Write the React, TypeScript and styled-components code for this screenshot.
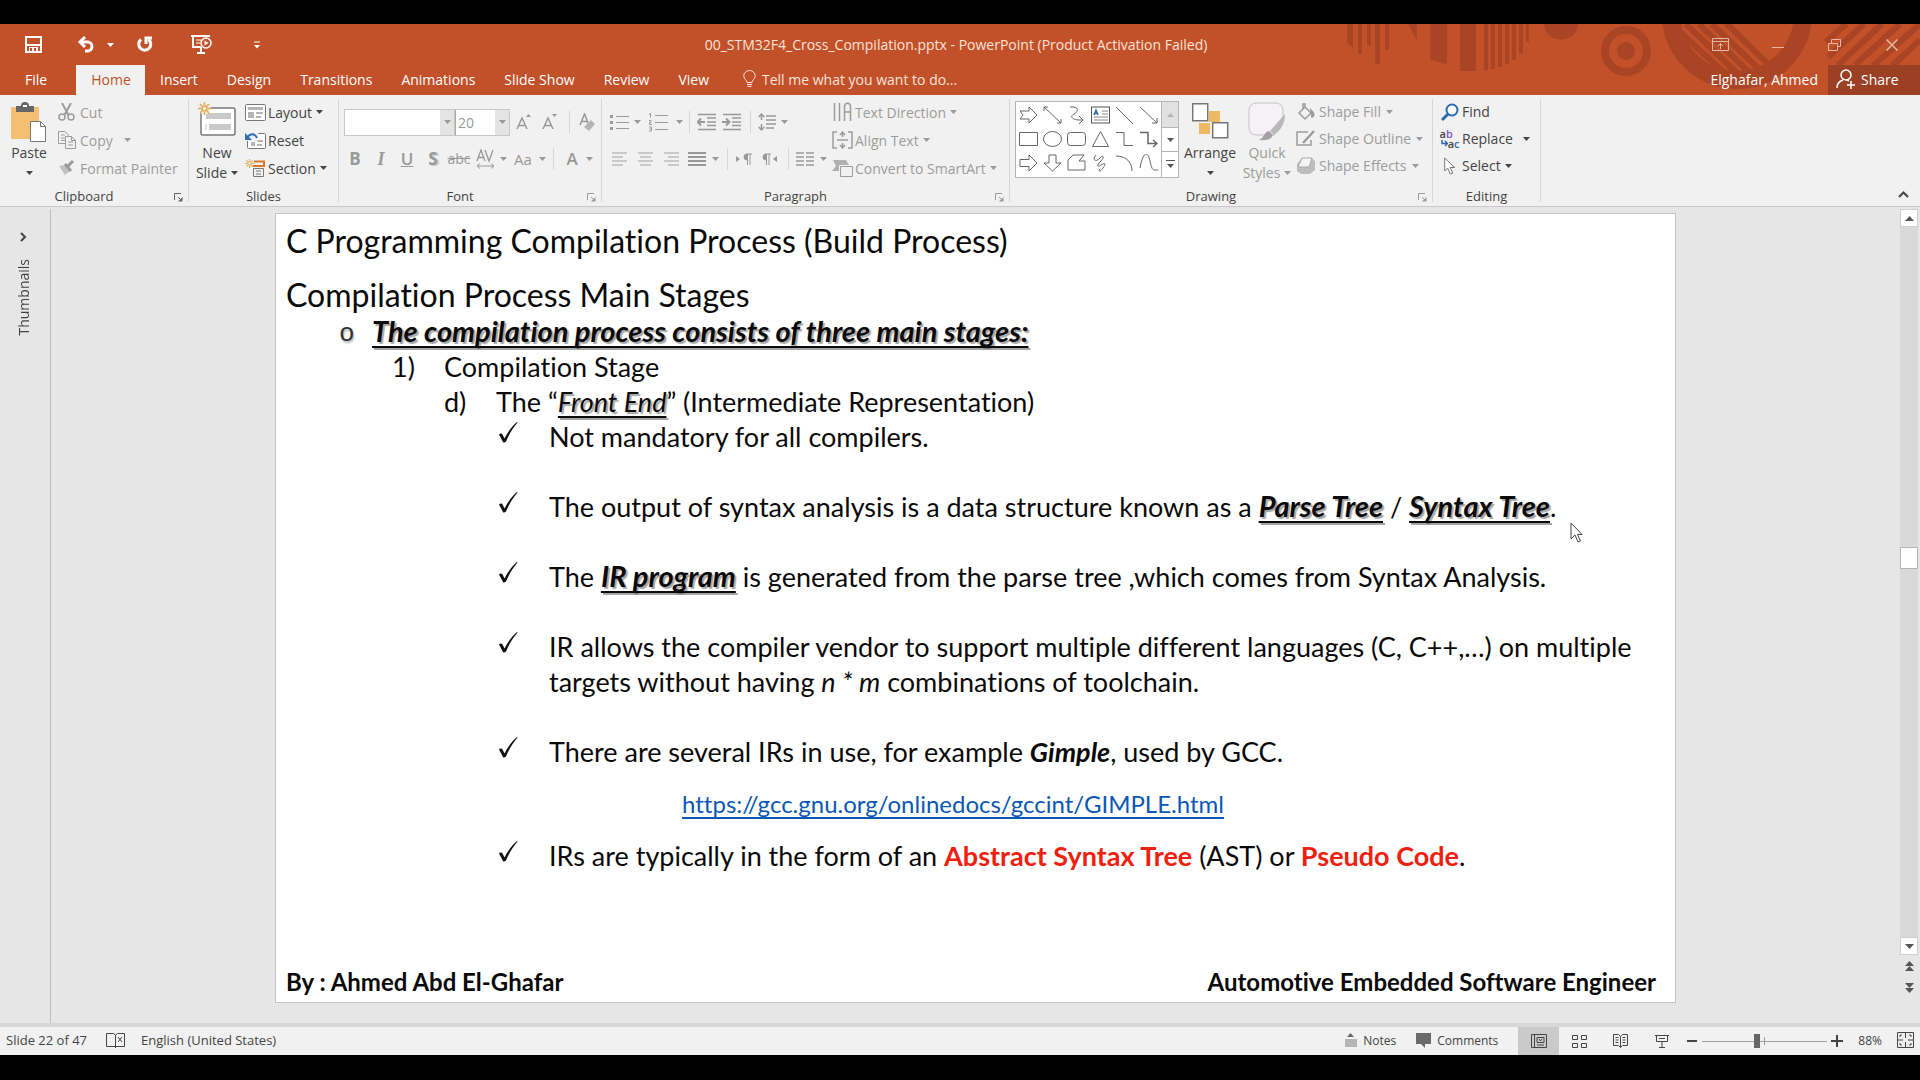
import React from "react";
import styled, { createGlobalStyle, css } from "styled-components";

const ui = `"Open Sans", "Noto Sans", sans-serif`;
const slideFont = `Lato, "Open Sans", sans-serif`;

const c = {
  brand: "#c25029",
  brandDark: "#9c4023",
  pattern: "#a94524",
  ribbon: "#f1f1f1",
  canvas: "#e6e6e6",
  line: "#c8c8c8",
  text: "#444444",
  dim: "#9c9c9c",
  cream: "#fbe3d8",
};

const GlobalStyle = createGlobalStyle`
  *, *::before, *::after { box-sizing: border-box; }
  body { margin: 0; background: #000; }
  button, select, input { font: inherit; color: inherit; margin: 0; }
`;

const Page = styled.div`
  position: relative;
  display: flex;
  flex-direction: column;
  min-height: 100vh;
  padding: 24px 0 25px;
  background: #000;
  font-family: ${ui};
  font-size: 14px;
  color: ${c.text};
`;

const bare = css`
  display: flex;
  align-items: center;
  padding: 0;
  border: 0;
  background: none;
  white-space: nowrap;
`;

/* ---------- header ---------- */

const Header = styled.header`
  position: relative;
  background: ${c.brand};
  color: #fff;
`;

const Pattern = styled.svg`
  position: absolute;
  top: 0;
  right: 0;
`;

const TitleBar = styled.div`
  position: relative;
  display: grid;
  grid-template-columns: 1fr auto 1fr;
  align-items: center;
  height: 41px;
  padding-right: 8px;
`;

const QuickAccess = styled.div`
  display: flex;
  align-items: center;
`;

const QuickButton = styled.button<{ $w: number }>`
  ${bare}
  justify-content: center;
  width: ${(p) => p.$w}px;
  height: 32px;
`;

const DocTitle = styled.div`
  color: ${c.cream};
`;

const WindowControls = styled.div`
  display: flex;
  justify-content: flex-end;
  margin-right: -8px;
`;

const WindowButton = styled.button`
  ${bare}
  justify-content: center;
  width: 57px;
  height: 38px;
  color: #e9b8a3;
`;

const TabBar = styled.nav`
  position: relative;
  display: flex;
  align-items: stretch;
  height: 30px;
`;

const Tab = styled.button<{ $active?: boolean; $file?: boolean }>`
  ${bare}
  justify-content: center;
  padding: 0 14px 2px 15px;
  color: ${(p) => (p.$active ? c.brand : "#fff")};
  background: ${(p) => (p.$active ? c.ribbon : "transparent")};
  ${(p) => p.$file && "width: 76px; padding-right: 19px;"}
  ${(p) => p.$active && "width: 69px;"}
`;

const TellMe = styled.button`
  ${bare}
  gap: 6px;
  margin-left: 20px;
  padding-bottom: 2px;
  color: ${c.cream};
`;

const Account = styled.div`
  display: flex;
  align-items: stretch;
  margin-left: auto;
`;

const AccountName = styled.button`
  ${bare}
  padding: 0 10px 2px;
`;

const Share = styled.button`
  ${bare}
  gap: 5px;
  width: 92px;
  padding: 0 0 2px 8px;
  background: ${c.brandDark};
`;

/* ---------- ribbon ---------- */

const Ribbon = styled.div`
  display: flex;
  height: 112px;
  background: ${c.ribbon};
  border-bottom: 1px solid ${c.line};
`;

const Group = styled.section<{ $w: number }>`
  display: flex;
  flex-direction: column;
  width: ${(p) => p.$w}px;
`;

const Divider = styled.div`
  width: 1px;
  margin: 4px 0;
  background: #d6d6d6;
`;

const GroupBody = styled.div<{ $pad?: number }>`
  display: flex;
  flex: 1;
  align-items: flex-start;
  padding-left: ${(p) => p.$pad ?? 0}px;
`;

const GroupFoot = styled.div`
  display: flex;
  height: 18px;
  font-size: 13px;
  line-height: 16px;
  span { flex: 1; text-align: center; }
`;

const Launcher = styled.button<{ $dim?: boolean }>`
  ${bare}
  justify-content: center;
  width: 20px;
  color: ${(p) => (p.$dim ? c.dim : "#666")};
`;

const Big = styled.button<{ $w: number; $dim?: boolean }>`
  ${bare}
  flex-direction: column;
  width: ${(p) => p.$w}px;
  padding-top: 7px;
  line-height: 20px;
  color: ${(p) => (p.$dim ? c.dim : c.text)};
`;

const BigIcon = styled.span`
  display: flex;
  justify-content: center;
  height: 41px;
`;

const BigLine = styled.span`
  display: flex;
  align-items: center;
  gap: 4px;
  height: 20px;
`;

const Stack = styled.div<{ $row: number; $ml?: number }>`
  display: grid;
  grid-auto-rows: ${(p) => p.$row}px;
  padding-top: 3px;
  margin-left: ${(p) => p.$ml ?? 0}px;
`;

const Small = styled.button<{ $dim?: boolean; $gap?: number; $drop?: number }>`
  ${bare}
  gap: ${(p) => p.$gap ?? 2}px;
  color: ${(p) => (p.$dim ? c.dim : c.text)};
  > span:first-child { display: flex; justify-content: center; width: 21px; }
  > svg:last-child { margin-left: ${(p) => p.$drop ?? 4}px; }
`;

const ToolRows = styled.div<{ $w?: number }>`
  display: grid;
  grid-template-rows: 26px 26px;
  gap: 11px;
  padding-top: 14px;
  ${(p) => p.$w && `width: ${p.$w}px;`}
`;

const ToolRow = styled.div`
  display: flex;
  align-items: center;
`;

const Tool = styled.button<{ $w: number; $faint?: boolean }>`
  ${bare}
  justify-content: center;
  width: ${(p) => p.$w}px;
  height: 26px;
  font-size: 17px;
  color: ${(p) => (p.$faint ? "#c9c9c9" : "#999")};
`;

const ToolGap = styled.span<{ $w: number }>`
  display: flex;
  justify-content: center;
  width: ${(p) => p.$w}px;
  &::before { content: ""; width: 1px; height: 22px; background: #d6d6d6; }
`;

const Glyph = styled.span<{ $kind: "b" | "i" | "u" | "s" | "abc" | "aa" | "a" }>`
  line-height: 20px;
  ${(p) => p.$kind === "b" && "font-weight: 700;"}
  ${(p) => p.$kind === "i" && "font: italic 700 18px 'Liberation Serif', serif;"}
  ${(p) => p.$kind === "u" && "font-weight: 600; text-decoration: underline;"}
  ${(p) => p.$kind === "s" && "font-weight: 700; text-shadow: 2px 1px 1px #c4c4c4;"}
  ${(p) => p.$kind === "abc" && "font-size: 14px; text-decoration: line-through;"}
  ${(p) => p.$kind === "aa" && "font-size: 15px;"}
  ${(p) => p.$kind === "a" && "font-weight: 600;"}
`;

const Combo = styled.label<{ $w: number }>`
  display: flex;
  width: ${(p) => p.$w}px;
  height: 27px;
  border: 1px solid ${c.line};
  background: #fff;
  color: #999;
  & + & { border-left-color: #aaa; }
  select {
    flex: 1;
    min-width: 0;
    padding: 0 2px;
    border: 0;
    background: none;
    appearance: none;
    outline: none;
  }
  > span {
    display: flex;
    align-items: center;
    justify-content: center;
    width: 14px;
    background: #e4e4e4;
  }
`;

const FirstRow = styled(ToolRow)`
  padding-left: 2px;
`;

const Gallery = styled.div`
  display: flex;
  width: 164px;
  height: 77px;
  margin: 6px 1px 0 5px;
  border: 1px solid #b4b4b4;
  background: #fff;
`;

const GalleryGrid = styled.div`
  display: grid;
  flex: 1;
  grid-template-columns: repeat(6, 24px);
  grid-auto-rows: 24px;
  padding: 1px 0 0;
`;

const GalleryItem = styled.button`
  ${bare}
  justify-content: center;
`;

const GalleryScroll = styled.div`
  display: grid;
  grid-template-rows: 25px 24px 1fr;
  width: 17px;
  border-left: 1px solid #b4b4b4;
`;

const ScrollStep = styled.button<{ $off?: boolean }>`
  ${bare}
  justify-content: center;
  background: ${(p) => (p.$off ? "#e1e1e1" : "#fff")};
  color: ${(p) => (p.$off ? "#b4b4b4" : "#555")};
  & + & { border-top: 1px solid #b4b4b4; }
`;

const Collapse = styled.button`
  ${bare}
  align-self: flex-end;
  justify-content: center;
  width: 34px;
  height: 24px;
  margin-left: auto;
`;

/* ---------- workspace ---------- */

const Workspace = styled.div`
  display: flex;
  flex: 1;
  background: ${c.canvas};
`;

const Thumbnails = styled.aside`
  display: flex;
  flex-direction: column;
  align-items: center;
  width: 51px;
  margin-top: 2px;
  padding: 18px 4px 0 0;
  border-right: 1px solid #bdbdbd;
`;

const PaneToggle = styled.button`
  ${bare}
  justify-content: center;
  width: 24px;
  height: 20px;
`;

const PaneName = styled.span`
  margin-top: 12px;
  writing-mode: vertical-rl;
  transform: rotate(180deg);
`;

const Canvas = styled.main`
  display: flex;
  flex: 1;
  padding: 6px 224px 20px;
`;

const Slide = styled.article`
  display: flex;
  flex: 1;
  flex-direction: column;
  padding: 5px 19px 0 10px;
  border: 1px solid #c4c4c4;
  background: #fff;
  font-family: ${slideFont};
  font-size: 27px;
  font-variant-ligatures: none;
  line-height: 35px;
  color: #0a0a0a;
  em, strong { line-height: 1; }
`;

const Heading = styled.h1`
  margin: 0 0 12px;
  font-size: 32px;
  font-weight: 400;
  line-height: 44px;
`;

const SubHeading = styled.h2`
  margin: 0;
  font-size: 32px;
  font-weight: 400;
  line-height: 39px;
`;

const List = styled.ul<{ $pl?: number }>`
  margin: 0;
  padding: 0 0 0 ${(p) => p.$pl ?? 0}px;
  list-style: none;
`;

const Item = styled.li<{ $marker: number; $after?: number }>`
  display: grid;
  grid-template-columns: ${(p) => p.$marker}px 1fr;
  margin-bottom: ${(p) => p.$after ?? 0}px;
`;

const Marker = styled.span`
  display: block;
  height: 35px;
`;

const Round = styled(Marker)`
  font-family: "Liberation Mono", monospace;
  font-size: 26px;
  line-height: 40px;
  color: #333;
  text-shadow: 1px 2px 2px rgba(0, 0, 0, 0.3);
`;

const Key = styled.em<{ $bold?: boolean }>`
  font-weight: ${(p) => (p.$bold ? 700 : 400)};
  font-size: ${(p) => (p.$bold ? 29 : 27)}px;
  text-decoration: underline;
  text-decoration-thickness: 2px;
  text-underline-offset: 4px;
  text-decoration-skip-ink: none;
  text-shadow: 2px 2px 1px rgba(0, 0, 0, 0.35);
`;

const StrongItalic = styled.em`
  font-weight: 700;
`;

const Red = styled.strong`
  color: #f0200f;
`;

const LinkRow = styled.p`
  margin: 17px 0;
  padding-left: 133px;
  font-size: 24px;
  a {
    color: #0b57b5;
    text-decoration-thickness: 2px;
    text-underline-offset: 4px;
    text-decoration-skip-ink: none;
  }
`;

const SlideFoot = styled.footer`
  display: flex;
  justify-content: space-between;
  margin-top: auto;
  padding-bottom: 3px;
  font-size: 24px;
  font-weight: 700;
`;

const ScrollBar = styled.div`
  display: flex;
  flex-direction: column;
  width: 20px;
  padding: 2px 2px 24px 0;
`;

const BarButton = styled.button<{ $plain?: boolean }>`
  ${bare}
  justify-content: center;
  height: ${(p) => (p.$plain ? 22 : 18)}px;
  border: 1px solid ${(p) => (p.$plain ? "transparent" : "#cfcfcf")};
  background: ${(p) => (p.$plain ? "transparent" : "#fff")};
  color: #555;
`;

const BarTrack = styled.div`
  display: flex;
  flex: 1;
  flex-direction: column;
  background: #d9d9d9;
  &::before { content: ""; flex: 320; }
  &::after { content: ""; flex: 368; }
`;

const BarThumb = styled.div`
  height: 22px;
  border: 1px solid #b4b4b4;
  background: #fff;
`;

/* ---------- status bar ---------- */

const Status = styled.footer`
  display: flex;
  align-items: center;
  height: 32px;
  padding: 0 6px;
  border-top: 4px solid #d7d7d7;
  background: ${c.ribbon};
  font-size: 13px;
`;

const StatusButton = styled.button<{ $ml?: number; $mr?: number }>`
  ${bare}
  gap: 6px;
  margin-left: ${(p) => p.$ml ?? 0}px;
  margin-right: ${(p) => p.$mr ?? 0}px;
  padding-bottom: 2px;
`;

const StatusRight = styled.div`
  display: flex;
  align-items: center;
  align-self: stretch;
  margin-left: auto;
  font-size: 12px;
`;

const ViewButton = styled.button<{ $active?: boolean }>`
  ${bare}
  justify-content: center;
  align-self: stretch;
  width: 41px;
  background: ${(p) => (p.$active ? "#cacaca" : "transparent")};
`;

const ZoomStep = styled.button`
  ${bare}
  justify-content: center;
  width: 20px;
`;

const Zoom = styled.input`
  width: 125px;
  height: 16px;
  appearance: none;
  background:
    linear-gradient(#999, #999) 62px center / 1px 8px no-repeat,
    linear-gradient(#a0a0a0, #a0a0a0) center / 100% 1px no-repeat;
  &::-webkit-slider-thumb {
    appearance: none;
    width: 6px;
    height: 14px;
    background: #666;
  }
`;

const Pointer = styled.svg`
  position: absolute;
  left: 1570px;
  top: 522px;
`;

/* ---------- icons ---------- */

type IconProps = { w: number; h: number; children: React.ReactNode; sw?: number };
const Icon = ({ w, h, children, sw = 1 }: IconProps) => (
  <svg width={w} height={h} viewBox={`0 0 ${w} ${h}`} fill="none" stroke="currentColor" strokeWidth={sw} aria-hidden="true">
    {children}
  </svg>
);

const Caret = () => (
  <Icon w={7} h={4}><path d="M0 0h7L3.5 4z" fill="currentColor" stroke="none" /></Icon>
);

const Lines = ({ rows, w = 18 }: { rows: [number, number][]; w?: number }) => (
  <Icon w={w} h={17} sw={2}>
    {rows.map(([a, b], i) => <path key={i} d={`M${a} ${2 + i * 4}H${b}`} />)}
  </Icon>
);

const LauncherIcon = () => (
  <Icon w={9} h={9}><path d="M.5 7V.5H7" /><path d="M4 4l3 3" /><path d="M8.500 4v4.500H4z" fill="currentColor" stroke="none" /></Icon>
);

const HeaderPattern = () => (
  <Pattern width="640" height="71" viewBox="0 0 640 71" fill={c.pattern} aria-hidden="true">
    <path d="M67 0h6v23l-6-4zM78 0h4v30h-4zM87 0h4v22h-4zM95 0h5v40h-5zM105 0h4v26h-4z" />
    <path d="M128 0h9v17zM150 0h17v41l-17-6zM180 0h16v47h-16z" />
    <path d="M204 0h4v46h-4zM211 0h4v45h-4zM218 0h4v43h-4zM225 0h4v40h-4zM232 0h4v36h-4zM239 0h4v30h-4zM246 0h3v18h-3z" />
    <path d="M264 0a16.500 15 0 0 0 34 0z" />
    <circle cx="346" cy="27" r="21" fill="none" stroke={c.pattern} strokeWidth="8" />
    <circle cx="346" cy="27" r="9" />
    <circle cx="457" cy="-10" r="66" fill="none" stroke={c.pattern} strokeWidth="18" />
    <g stroke={c.pattern} strokeWidth="6" fill="none">
      <path d="M399 7l52 48M406 0l56 54M419 0l54 52M432 0l50 48M445 -2l44 43" />
      <path d="M566 0l-20 18M584 0l-36 33M602 0l-44 41M620 0l-45 41M640 0l-47 42M640 16l-28 26" />
    </g>
  </Pattern>
);

const SaveIcon = () => (
  <Icon w={17} h={17} sw={2}><path d="M1 1h15v15H1zM1 9h15" /><path d="M4 11h9v5H4z" fill="currentColor" stroke="none" /><path d="M6 12v3M10 12v3" stroke={c.brand} /></Icon>
);
const UndoIcon = () => (
  <Icon w={18} h={17} sw={3}><path d="M3 6h7.500a4.500 4.500 0 0 1 0 9H8" /><path d="M8 1L3 6l5 5" /></Icon>
);
const RedoIcon = () => (
  <Icon w={18} h={17} sw={3}><path d="M5 3.500a6 6 0 1 0 7.500 0" /><path d="M10 8V2h6" /></Icon>
);
const PresentIcon = () => (
  <Icon w={21} h={19} sw={2}><path d="M0 1h19M2 1v11h8M6 18h8M10 12v5" /><path d="M5 5h5M5 8h4" strokeWidth="1" /><circle cx="15" cy="8" r="5" fill={c.brand} strokeWidth="1.500" /><path d="M13.500 5.500v5l4-2.500z" fill="currentColor" stroke="none" /></Icon>
);
const MoreIcon = () => (
  <Icon w={6} h={8}><path d="M0 1h6" /><path d="M0 4h6L3 7.500z" fill="currentColor" stroke="none" /></Icon>
);

const PasteIcon = () => (
  <Icon w={36} h={40}>
    <path d="M0 5h28v32H0z" fill="#f3c073" stroke="none" />
    <path d="M5 4h5a4 4 0 0 1 8 0h5v6H5z" fill="#666" stroke="none" />
    <path d="M12 3h4v2h-4z" fill="#fff" stroke="none" />
    <path d="M19.500 19.500h10l5 5v15h-15z" fill="#fff" stroke="#777" /><path d="M29.500 19.500v5h5" stroke="#777" />
  </Icon>
);
const CutIcon = () => (
  <Icon w={17} h={18} sw={2}><path d="M4 0l6.500 12M13 0L6.500 12" /><circle cx="4" cy="14" r="3" strokeWidth="1.500" /><circle cx="13" cy="14" r="3" strokeWidth="1.500" /></Icon>
);
const CopyIcon = () => (
  <Icon w={18} h={18}><path d="M7 12.500H.5V.5H7l3 3v2M3 4h4M3 7h4M3 9.500h4" /><path d="M7.500 5.500h6l4 4v8h-10zM13.500 5.500v4h4M10 11h5M10 14h5" /></Icon>
);
const PainterIcon = () => (
  <Icon w={17} h={16}><path d="M1 6l6-1 5 6-5 4C5 12 3 9 1 6z" fill="#c2c2c2" stroke="none" /><path d="M7 4l6 7M10 6l5-5" strokeWidth="3" /></Icon>
);

const Spark = () => <path d="M6.500 0v3M6.500 10v3M0 6.500h3M10 6.500h3M2 2l2 2M9 9l2 2M11 2L9 4M4 9l-2 2M4 6.500a2.500 2.500 0 1 0 5 0a2.500 2.500 0 1 0-5 0" stroke="#e6a950" strokeWidth="1.500" />;

const NewSlideIcon = () => (
  <Icon w={38} h={35}>
    <rect x="3" y="6" width="34" height="27" rx="2" fill="#fff" stroke="#7a7a7a" strokeWidth="1.500" />
    <path d="M8 11h25v6H8zM11 22h22v6H11z" fill="#c9c9c9" stroke="none" /><path d="M8 22v6" stroke="#c9c9c9" />
    <circle cx="6.500" cy="6.500" r="6" fill={c.ribbon} stroke="none" />
    <Spark />
  </Icon>
);
const LayoutIcon = () => (
  <Icon w={21} h={17}><rect x=".5" y=".5" width="20" height="16" rx="1" fill="#fff" stroke="#777" /><path d="M3 3h15v3H3zM3 8h6v6H3zM11 8h7v2h-7zM11 12h5v2h-5z" fill="#b5b5b5" stroke="none" /></Icon>
);
const ResetIcon = () => (
  <Icon w={21} h={17}><rect x="2.500" y="1.500" width="18" height="15" rx="1" fill="#fff" stroke="#777" /><path d="M6 10h4v4H6zM12 8h6v2h-6zM12 12h5v2h-5z" fill="#b5b5b5" stroke="none" /><path d="M0 0h13v9H0z" fill={c.ribbon} stroke="none" /><path d="M2 6C5 1 10 1 12 6" stroke="#2f6fb5" strokeWidth="2" /><path d="M0 1v7h7z" fill="#2f6fb5" stroke="none" /></Icon>
);
const SectionIcon = () => (
  <Icon w={21} h={18}><path d="M9 2.500h10v4" stroke="#d9782d" strokeWidth="2" /><path d="M8 7h12" stroke="#d9782d" strokeWidth="2" /><path d="M8.500 9.500h10v8h-10zM11 12h5M11 15h5" stroke="#777" /><g transform="scale(.7)"><Spark /></g></Icon>
);

const GrowIcon = ({ up }: { up?: boolean }) => (
  <Icon w={18} h={18}><path d="M2 16L7 5l5 11M4 12.500h6" strokeWidth="1.500" /><path d={up ? "M11 4l2.500-3L16 4z" : "M11 1h5l-2.500 3z"} fill="currentColor" stroke="none" /></Icon>
);
const ClearIcon = () => (
  <Icon w={18} h={19}><path d="M2 12L6.500 1 11 12M4 8.500h5" strokeWidth="1.500" /><path d="M6 14l7-7 4 4-6 7z" fill="#b5b5b5" stroke="none" /></Icon>
);

const BulletsIcon = () => (
  <Icon w={19} h={17}><path d="M0 1h3v3H0zM0 7h3v3H0zM0 13h3v3H0z" fill="currentColor" stroke="none" /><path d="M6 2.500h13M6 8.500h13M6 14.500h13" /></Icon>
);
const NumbersIcon = () => (
  <Icon w={20} h={19}><path d="M2.500 0v4.500M1 1h1M1 7.500h2v2H1.500v2H4M1 14h2.500v4H1M1.500 16h2" /><path d="M7 2.500h13M7 9.500h13M7 16.500h13" /></Icon>
);
const IndentIcon = ({ flip }: { flip?: boolean }) => (
  <Icon w={19} h={18} sw={1.5}><path d="M1 1.500h18M10 5h9M10 9h9M10 12.500h9M1 16.500h18" />{flip ? <path d="M0 9h7M4 5.500L7.500 9 4 12.500" strokeWidth="2" /> : <path d="M1 9h7M4 5.500L.7 9 4 12.500" strokeWidth="2" />}</Icon>
);
const LineSpacingIcon = () => (
  <Icon w={18} h={19} sw={1.5}><path d="M8 3h10M8 7h10M8 11h10M8 15h8" /><path d="M3.500 1v6M3.500 11v6M.7 4L3.500 1l2.800 3M.7 14l2.800 3 2.800-3" /></Icon>
);
const DirIcon = ({ rtl }: { rtl?: boolean }) => (
  <Icon w={16} h={13}>{rtl ? <path d="M16 3v6l-4-3z" fill="currentColor" stroke="none" /> : <path d="M0 3v6l4-3z" fill="currentColor" stroke="none" />}<g transform={rtl ? "translate(-6 0)" : ""}><path d="M11 1a3 3 0 0 0 0 6z" fill="currentColor" /><path d="M11.500 1v11M14 1v11M10 1h6" /></g></Icon>
);
const ColumnsIcon = () => (
  <Icon w={18} h={15} sw={1.5}><path d="M0 1h8M0 5h8M0 9h8M0 13h8M10 1h8M10 5h8M10 9h8M10 13h8" /></Icon>
);
const TextDirIcon = () => (
  <Icon w={19} h={20} sw={1.5}><path d="M1.500 1v18M6.500 1v18M11.500 19V5c0-5 6-5 6 0v14M11.500 10h6" /></Icon>
);
const AlignTextIcon = () => (
  <Icon w={21} h={18} sw={1.5}><path d="M5 1H1v16h4M16 1h4v16h-4M5 9h11M10.500 1v5M10.500 12v5M8 4l2.500-3L13 4M8 14l2.500 3 2.500-3" /></Icon>
);
const SmartArtIcon = () => (
  <Icon w={21} h={17}><path d="M1 0h13l3 5H7v6H0l4-5z" fill="#b0b0b0" stroke="none" /><path d="M8.500 6.500h12v10h-12z" fill="#f1f1f1" /></Icon>
);

const shapes: { name: string; art: React.ReactNode }[] = [
  { name: "Right arrow", art: <path d="M1 5h9V1l8 8-8 8v-4H1l3-4z" /> },
  { name: "Double arrow line", art: <path d="M1 1l17 16M1 5V1h4M18 13v4h-4" /> },
  { name: "Curved connector", art: <path d="M3 1c9-1 9 4 4 7s-1 6 6 6h3M12 10l4 4-4 4" /> },
  { name: "Text box", art: <><rect x=".5" y="1" width="18" height="16" stroke="#555" /><path d="M11 5h6M11 8h6M3 11h14M3 14h14" stroke="#888" /><path d="M3 9l2-5 2 5M4 7.500h2" stroke="#2f6fb5" strokeWidth="1.500" /></> },
  { name: "Line", art: <path d="M1 1l17 17" /> },
  { name: "Arrow line", art: <path d="M1 1l17 16M18 12v5h-5" /> },
  { name: "Rectangle", art: <path d="M.5 2.500h18v13H.5z" /> },
  { name: "Oval", art: <ellipse cx="9.500" cy="9" rx="9" ry="7.500" /> },
  { name: "Rounded rectangle", art: <rect x=".5" y="2.500" width="18" height="13" rx="3" /> },
  { name: "Triangle", art: <path d="M9.500 1.500l8 15h-16z" /> },
  { name: "Elbow connector", art: <path d="M1 2.500h8v13h9" /> },
  { name: "Elbow arrow", art: <path d="M1 2.500h8v11h9M14 10l4 3.500-4 3.500" strokeWidth="1.500" /> },
  { name: "Block arrow", art: <path d="M1 5.500h9V1l8 8-8 8v-4.500H1z" /> },
  { name: "Down arrow", art: <path d="M6 1h7v8h5l-8.500 8L1 9h5z" /> },
  { name: "Freeform", art: <path d="M1 6l5-5h11l-5 6h6v9H1z" /> },
  { name: "Scribble", art: <path d="M5 1c-5 6 1 7 4 3s5-1 1 3-5 7 0 4 5-1 2 3-5 4-3 1" /> },
  { name: "Arc", art: <path d="M1 2c11 0 16 7 16 15" /> },
  { name: "Curve", art: <path d="M1 14C4-3 9-3 11 7s3 9 8 9" /> },
];

const ArrangeIcon = () => (
  <Icon w={37} h={37}><path d="M17 9h11v11H17zM7 21h11v11H7z" fill="#efb964" stroke="none" /><path d="M.7 1.700h15v17h-15zM20.700 20.700h15v15h-15z" fill="#fff" stroke="#777" strokeWidth="1.500" /></Icon>
);
const QuickIcon = () => (
  <Icon w={38} h={40}><path d="M27 33H8a7 7 0 0 1-7-7V8a7 7 0 0 1 7-7h20a7 7 0 0 1 7 7v8" fill="#f6f1f7" stroke="#c4c4c4" /><path d="M37 12L22 29l4 4c6-4 11-11 11-21z" fill="#b8b8b8" stroke="none" /><path d="M21 29l4 4c-2 5-8 6-14 5 5-2 5-8 10-9z" fill="#a3a3a3" stroke="none" /></Icon>
);
const FillIcon = () => (
  <Icon w={18} h={18} sw={1.5}><path d="M8 4l6 6-6 6-6-6zM8 4V1h-2v5" /><path d="M14 7c3 3 4 6 1 7z" fill="currentColor" /></Icon>
);
const OutlineIcon = () => (
  <Icon w={20} h={17} sw={1.5}><path d="M12 2H1v13h14v-5" /><path d="M7 13l11-12" strokeWidth="2.500" /></Icon>
);
const EffectsIcon = () => (
  <Icon w={18} h={17}><path d="M5 1h10l3 3v9l-5 4H4l-4-3V7z" fill="#bdbdbd" stroke="none" /><path d="M5 1h10l-3 9H1z" fill="#f4f4f4" stroke="#aaa" /></Icon>
);
const FindIcon = () => (
  <Icon w={18} h={18} sw={2}><circle cx="11" cy="7" r="5.500" stroke="#2c6ab0" fill="#fff" /><path d="M7 11l-6 6" stroke="#2c6ab0" strokeWidth="3" /></Icon>
);
const ReplaceGlyph = styled.span`
  display: grid;
  grid-template-rows: 10px 10px;
  width: 20px;
  font-size: 11px;
  font-weight: 600;
  line-height: 10px;
  text-align: left;
  b { color: #8a55b8; font-weight: 600; }
  i { color: #2c6ab0; font-style: normal; }
  > span:last-child { display: flex; align-items: center; justify-content: flex-end; }
`;
const ReplaceIcon = () => (
  <ReplaceGlyph>
    <span>a<b>b</b></span>
    <span>
      <Icon w={7} h={7}><path d="M1 0v3.500h5M4 1l2.500 2.500L4 6" stroke="#2c6ab0" strokeWidth="1.500" /></Icon>
      a<i>c</i>
    </span>
  </ReplaceGlyph>
);
const SelectIcon = () => (
  <Icon w={12} h={18}><path d="M.7 1v13l3-3 2.500 6 2.500-1-2.500-5.500h4.500z" fill="#fff" stroke="#777" /></Icon>
);

type SmallItem = { label: string; icon: React.ReactNode; drop?: number };
const SmallStack = ({ items, row, ml, gap, dim }: { items: SmallItem[]; row: number; ml?: number; gap?: number; dim?: boolean }) => (
  <Stack $row={row} $ml={ml}>
    {items.map((it) => (
      <Small key={it.label} $dim={dim} $gap={gap} $drop={it.drop}>
        <span>{it.icon}</span>
        {it.label}
        {it.drop !== undefined && <Caret />}
      </Small>
    ))}
  </Stack>
);

const RibbonGroup = ({ name, w, pad, launcher, children }: { name: string; w: number; pad?: number; launcher?: "on" | "dim"; children: React.ReactNode }) => (
  <>
    <Group $w={w} aria-label={name}>
      <GroupBody $pad={pad}>{children}</GroupBody>
      <GroupFoot>
        <span>{name}</span>
        {launcher && <Launcher $dim={launcher === "dim"} aria-label={`${name} options`}><LauncherIcon /></Launcher>}
      </GroupFoot>
    </Group>
    <Divider />
  </>
);

const Drop = ({ w, of }: { w: number; of: string }) => (
  <Tool $w={w} aria-label={`${of} menu`}><Caret /></Tool>
);

const Check = () => (
  <Marker>
    <svg width="24" height="30" viewBox="0 0 24 30" aria-hidden="true">
      <path d="M3 15.500c1-1.500 3-1.500 3.500 0l2 4C12 13 16 7 21 3l.6.6C17 9 13 15 10 22.500c-1.500 1.500-3 1.500-3.500-.5z" fill="#111" />
    </svg>
  </Marker>
);

const tabs = ["File", "Home", "Insert", "Design", "Transitions", "Animations", "Slide Show", "Review", "View"];

export default function App() {
  return (
    <Page>
      <GlobalStyle />
      <Header>
        <HeaderPattern />
        <TitleBar>
          <QuickAccess>
            <QuickButton $w={66} aria-label="Save"><SaveIcon /></QuickButton>
            <QuickButton $w={40} aria-label="Undo"><UndoIcon /></QuickButton>
            <QuickButton $w={8} aria-label="Undo history"><Caret /></QuickButton>
            <QuickButton $w={62} aria-label="Repeat"><RedoIcon /></QuickButton>
            <QuickButton $w={50} aria-label="Start from beginning"><PresentIcon /></QuickButton>
            <QuickButton $w={62} aria-label="Customize quick access"><MoreIcon /></QuickButton>
          </QuickAccess>
          <DocTitle>00_STM32F4_Cross_Compilation.pptx - PowerPoint (Product Activation Failed)</DocTitle>
          <WindowControls>
            <WindowButton aria-label="Ribbon display options"><Icon w={17} h={13}><path d="M.5.5h16v12H.5zM.5 3.500h16M8.500 11V5.500M6 8l2.500-2.500L11 8" /></Icon></WindowButton>
            <WindowButton aria-label="Minimize"><Icon w={12} h={12}><path d="M0 8.500h12" /></Icon></WindowButton>
            <WindowButton aria-label="Restore"><Icon w={13} h={12}><path d="M.5 4.500h9v7h-9zM3.500 4V.5h9v7H10" /></Icon></WindowButton>
            <WindowButton aria-label="Close"><Icon w={12} h={12} sw={1.5}><path d="M.5.5l11 11M11.500.5l-11 11" /></Icon></WindowButton>
          </WindowControls>
        </TitleBar>
        <TabBar>
          {tabs.map((t) => <Tab key={t} $active={t === "Home"} $file={t === "File"}>{t}</Tab>)}
          <TellMe>
            <Icon w={13} h={18}><path d="M4 12.500C4 10 .8 9 .8 5.800a5.700 5.300 0 0 1 11.400 0C12.200 9 9 10 9 12.500zM4 14.500h5M4.500 16.500h4" /></Icon>
            Tell me what you want to do...
          </TellMe>
          <Account>
            <AccountName>Elghafar, Ahmed</AccountName>
            <Share>
              <Icon w={20} h={20} sw={1.5}><circle cx="10" cy="6" r="5" /><path d="M1 19c0-5 3-7 6-8M11 11l2 1M11 16h8M15 12v8" /></Icon>
              Share
            </Share>
          </Account>
        </TabBar>
      </Header>

      <Ribbon>
        <RibbonGroup name="Clipboard" w={188} pad={2} launcher="on">
          <Big $w={54}>
            <BigIcon><PasteIcon /></BigIcon>
            <BigLine>Paste</BigLine>
            <BigLine><Caret /></BigLine>
          </Big>
          <SmallStack dim row={28} gap={3} items={[
            { label: "Cut", icon: <CutIcon /> },
            { label: "Copy", icon: <CopyIcon />, drop: 8 },
            { label: "Format Painter", icon: <PainterIcon /> },
          ]} />
        </RibbonGroup>

        <RibbonGroup name="Slides" w={149} pad={2}>
          <Big $w={52}>
            <BigIcon><NewSlideIcon /></BigIcon>
            <BigLine>New</BigLine>
            <BigLine>Slide<Caret /></BigLine>
          </Big>
          <SmallStack row={28} ml={2} items={[
            { label: "Layout", icon: <LayoutIcon />, drop: 2 },
            { label: "Reset", icon: <ResetIcon /> },
            { label: "Section", icon: <SectionIcon />, drop: 2 },
          ]} />
        </RibbonGroup>

        <RibbonGroup name="Font" w={262} pad={3} launcher="dim">
          <ToolRows>
            <FirstRow>
              <Combo $w={111}><select aria-label="Font" defaultValue=""><option value=""></option></select><span><Caret /></span></Combo>
              <Combo $w={55}><select aria-label="Font size" defaultValue="20"><option>20</option></select><span><Caret /></span></Combo>
              <Tool $w={28} aria-label="Increase font size"><GrowIcon up /></Tool>
              <Tool $w={24} aria-label="Decrease font size"><GrowIcon /></Tool>
              <ToolGap $w={14} />
              <Tool $w={22} aria-label="Clear formatting"><ClearIcon /></Tool>
            </FirstRow>
            <ToolRow>
              <Tool $w={26}><Glyph $kind="b">B</Glyph></Tool>
              <Tool $w={26}><Glyph $kind="i">I</Glyph></Tool>
              <Tool $w={26}><Glyph $kind="u">U</Glyph></Tool>
              <Tool $w={26}><Glyph $kind="s">S</Glyph></Tool>
              <Tool $w={26}><Glyph $kind="abc">abc</Glyph></Tool>
              <Tool $w={26} aria-label="Character spacing">
                <Icon w={19} h={20}><path d="M1 12L5 1l4 11M2.500 8.500h5M9 1l4 11 4-11" strokeWidth="1.300" /><path d="M1 17h17M4 14.500L1 17l3 2.500M15 14.500l3 2.500-3 2.500" /></Icon>
              </Tool>
              <Drop w={10} of="Character spacing" />
              <Tool $w={30}><Glyph $kind="aa">Aa</Glyph></Tool>
              <Drop w={8} of="Change case" />
              <ToolGap $w={14} />
              <Tool $w={24}><Glyph $kind="a">A</Glyph></Tool>
              <Drop w={10} of="Font color" />
            </ToolRow>
          </ToolRows>
        </RibbonGroup>

        <RibbonGroup name="Paragraph" w={407} pad={4} launcher="dim">
          <ToolRows $w={226}>
            <ToolRow>
              <Tool $w={26} aria-label="Bullets"><BulletsIcon /></Tool>
              <Drop w={10} of="Bullets" />
              <Tool $w={32} aria-label="Numbering"><NumbersIcon /></Tool>
              <Drop w={10} of="Numbering" />
              <ToolGap $w={10} />
              <Tool $w={24} aria-label="Decrease list level"><IndentIcon /></Tool>
              <Tool $w={26} aria-label="Increase list level"><IndentIcon flip /></Tool>
              <ToolGap $w={12} />
              <Tool $w={22} aria-label="Line spacing"><LineSpacingIcon /></Tool>
              <Drop w={12} of="Line spacing" />
            </ToolRow>
            <ToolRow>
              <Tool $w={26} $faint aria-label="Align left"><Lines w={15} rows={[[0, 15], [0, 11], [0, 15], [0, 11]]} /></Tool>
              <Tool $w={26} $faint aria-label="Center"><Lines w={15} rows={[[0, 15], [2, 13], [0, 15], [2, 13]]} /></Tool>
              <Tool $w={26} $faint aria-label="Align right"><Lines w={15} rows={[[0, 15], [4, 15], [0, 15], [4, 15]]} /></Tool>
              <Tool $w={26} aria-label="Justify"><Lines rows={[[0, 18], [0, 18], [0, 18], [0, 18]]} /></Tool>
              <Drop w={10} of="Justify" />
              <ToolGap $w={14} />
              <Tool $w={20} aria-label="Left to right"><DirIcon /></Tool>
              <Tool $w={30} aria-label="Right to left"><DirIcon rtl /></Tool>
              <ToolGap $w={8} />
              <Tool $w={26} aria-label="Columns"><ColumnsIcon /></Tool>
              <Drop w={10} of="Columns" />
            </ToolRow>
          </ToolRows>
          <SmallStack dim row={28} items={[
            { label: "Text Direction", icon: <TextDirIcon />, drop: 2 },
            { label: "Align Text", icon: <AlignTextIcon />, drop: 2 },
            { label: "Convert to SmartArt", icon: <SmartArtIcon />, drop: 2 },
          ]} />
        </RibbonGroup>

        <RibbonGroup name="Drawing" w={422} launcher="dim">
          <Gallery>
            <GalleryGrid>
              {shapes.map((s) => (
                <GalleryItem key={s.name} aria-label={s.name}>
                  <Icon w={19} h={18}><g stroke="#666">{s.art}</g></Icon>
                </GalleryItem>
              ))}
            </GalleryGrid>
            <GalleryScroll>
              <ScrollStep $off aria-label="Previous shapes"><Icon w={7} h={4}><path d="M0 4h7L3.500 0z" fill="currentColor" stroke="none" /></Icon></ScrollStep>
              <ScrollStep aria-label="Next shapes"><Caret /></ScrollStep>
              <ScrollStep aria-label="All shapes"><Icon w={9} h={9}><path d="M0 .5h9" /><path d="M1 4h7L4.500 8z" fill="currentColor" stroke="none" /></Icon></ScrollStep>
            </GalleryScroll>
          </Gallery>
          <Big $w={60}>
            <BigIcon><ArrangeIcon /></BigIcon>
            <BigLine>Arrange</BigLine>
            <BigLine><Caret /></BigLine>
          </Big>
          <Big $w={54} $dim>
            <BigIcon><QuickIcon /></BigIcon>
            <BigLine>Quick</BigLine>
            <BigLine>Styles<Caret /></BigLine>
          </Big>
          <SmallStack dim row={27} gap={3} ml={1} items={[
            { label: "Shape Fill", icon: <FillIcon />, drop: 2 },
            { label: "Shape Outline", icon: <OutlineIcon />, drop: 2 },
            { label: "Shape Effects", icon: <EffectsIcon />, drop: 2 },
          ]} />
        </RibbonGroup>

        <RibbonGroup name="Editing" w={107} pad={6}>
          <SmallStack row={27} items={[
            { label: "Find", icon: <FindIcon /> },
            { label: "Replace", icon: <ReplaceIcon />, drop: 8 },
            { label: "Select", icon: <SelectIcon />, drop: 2 },
          ]} />
        </RibbonGroup>
        <Collapse aria-label="Collapse the ribbon"><Icon w={11} h={7} sw={2}><path d="M1 6l4.500-4.500L10 6" /></Icon></Collapse>
      </Ribbon>

      <Workspace>
        <Thumbnails>
          <PaneToggle aria-label="Expand thumbnails"><Icon w={7} h={10} sw={2}><path d="M1 1l4 4-4 4" /></Icon></PaneToggle>
          <PaneName>Thumbnails</PaneName>
        </Thumbnails>
        <Canvas>
          <Slide>
            <Heading>C Programming Compilation Process (Build Process)</Heading>
            <SubHeading>Compilation Process Main Stages</SubHeading>
            <List $pl={53}>
              <Item $marker={33}>
                <Round>o</Round>
                <div>
                  <Key $bold>The compilation process consists of three main stages:</Key>
                  <List as="ol" $pl={20}>
                    <Item $marker={52}>
                      <Marker>1)</Marker>
                      <div>
                        Compilation Stage
                        <List as="ol">
                          <Item $marker={52}>
                            <Marker>d)</Marker>
                            <div>
                              The “<Key>Front End</Key>” (Intermediate Representation)
                              <List>
                                <Item $marker={53} $after={35}>
                                  <Check />
                                  <div>Not mandatory for all compilers.</div>
                                </Item>
                                <Item $marker={53} $after={35}>
                                  <Check />
                                  <div>The output of syntax analysis is a data structure known as a <Key $bold>Parse Tree</Key> / <Key $bold>Syntax Tree</Key>.</div>
                                </Item>
                                <Item $marker={53} $after={35}>
                                  <Check />
                                  <div>The <Key $bold>IR program</Key> is generated from the parse tree ,which comes from Syntax Analysis.</div>
                                </Item>
                                <Item $marker={53} $after={35}>
                                  <Check />
                                  <div>IR allows the compiler vendor to support multiple different languages (C, C++,…) on multiple targets without having <em>n * m</em> combinations of toolchain.</div>
                                </Item>
                                <Item $marker={53}>
                                  <Check />
                                  <div>
                                    There are several IRs in use, for example <StrongItalic>Gimple</StrongItalic>, used by GCC.
                                    <LinkRow><a href="https://gcc.gnu.org/onlinedocs/gccint/GIMPLE.html">https://gcc.gnu.org/onlinedocs/gccint/GIMPLE.html</a></LinkRow>
                                  </div>
                                </Item>
                                <Item $marker={53}>
                                  <Check />
                                  <div>IRs are typically in the form of an <Red>Abstract Syntax Tree</Red> (AST) or <Red>Pseudo Code</Red>.</div>
                                </Item>
                              </List>
                            </div>
                          </Item>
                        </List>
                      </div>
                    </Item>
                  </List>
                </div>
              </Item>
            </List>
            <SlideFoot><span>By : Ahmed Abd El-Ghafar</span><span>Automotive Embedded Software Engineer</span></SlideFoot>
          </Slide>
        </Canvas>
        <ScrollBar>
          <BarButton aria-label="Scroll up"><Icon w={9} h={5}><path d="M0 5h9L4.500 0z" fill="currentColor" stroke="none" /></Icon></BarButton>
          <BarTrack><BarThumb /></BarTrack>
          <BarButton aria-label="Scroll down"><Icon w={9} h={5}><path d="M0 0h9L4.500 5z" fill="currentColor" stroke="none" /></Icon></BarButton>
          <BarButton $plain aria-label="Previous slide"><Icon w={9} h={10}><path d="M0 5h9L4.500 0zM0 10h9L4.500 5z" fill="currentColor" stroke="none" /></Icon></BarButton>
          <BarButton $plain aria-label="Next slide"><Icon w={9} h={10}><path d="M0 0h9L4.500 5zM0 5h9L4.500 10z" fill="currentColor" stroke="none" /></Icon></BarButton>
        </ScrollBar>
      </Workspace>

      <Status>
        <StatusButton $mr={19}>Slide 22 of 47</StatusButton>
        <StatusButton $mr={16} aria-label="Proofing">
          <Icon w={19} h={15}><path d="M9.500 13.500H.5V.5h7l2 1.500 2-1.500h7v13h-9zM9.500 2v13M12 4l4 5M16 4l-4 5" /></Icon>
        </StatusButton>
        <StatusButton>English (United States)</StatusButton>
        <StatusRight>
          <StatusButton $mr={20}>
            <Icon w={13} h={14}><path d="M1 6h12v8H1z" fill="#b5b5b5" stroke="none" /><path d="M3 4l3.500-4L10 4z" fill="#666" stroke="none" /></Icon>
            Notes
          </StatusButton>
          <StatusButton $mr={20}>
            <Icon w={15} h={15}><path d="M0 0h15v11H9v4l-4-4H0z" fill="#6a6a6a" stroke="none" /></Icon>
            Comments
          </StatusButton>
          <ViewButton $active aria-label="Normal view"><Icon w={16} h={14}><path d="M.5.5h15v13H.5zM3.500 1v12M6 3.500h7v5H6zM6 11h7M8 5l1.500 2L11 5" /></Icon></ViewButton>
          <ViewButton aria-label="Slide sorter"><Icon w={15} h={15}><path d="M.5 1.500h5v4h-5zM9.500 1.500h5v4h-5zM.5 9.500h5v4h-5zM9.500 9.500h5v4h-5z" /></Icon></ViewButton>
          <ViewButton aria-label="Reading view"><Icon w={15} h={14}><path d="M7.500 2.500L5.500.5h-5v11h5l2 2 2-2h5V.5h-5zM7.500 2.500v11M2.500 3.500h3M2.500 6h3M2.500 8.500h3M9.500 3.500h3M9.500 6h3M9.500 8.500h3" /></Icon></ViewButton>
          <ViewButton aria-label="Slide show"><Icon w={14} h={14}><path d="M0 1.500h14M1.500 1.500v6h11v-6M4 4.500h6M7 8v5M4 13.500h6" /></Icon></ViewButton>
          <ZoomStep aria-label="Zoom out"><Icon w={10} h={10} sw={2}><path d="M0 5h10" /></Icon></ZoomStep>
          <Zoom type="range" min={10} max={202} defaultValue={93} aria-label="Zoom" />
          <ZoomStep aria-label="Zoom in"><Icon w={12} h={12} sw={2}><path d="M0 6h12M6 0v12" /></Icon></ZoomStep>
          <StatusButton $ml={11} $mr={15}>88%</StatusButton>
          <StatusButton aria-label="Fit slide to window"><Icon w={17} h={16}><path d="M.5.5h16v15H.5zM8.500 1v5M8.500 10v5M1 8h5M11 8h5M3 5V3h2M14 5V3h-2M3 11v2h2M14 11v2h-2" /></Icon></StatusButton>
        </StatusRight>
      </Status>
      <Pointer width="14" height="22" viewBox="0 0 14 22" aria-hidden="true">
        <path d="M1 1v16l4-4 3 7 2.500-1-3-6.500H12z" fill="#fff" stroke="#444" />
      </Pointer>
    </Page>
  );
}
